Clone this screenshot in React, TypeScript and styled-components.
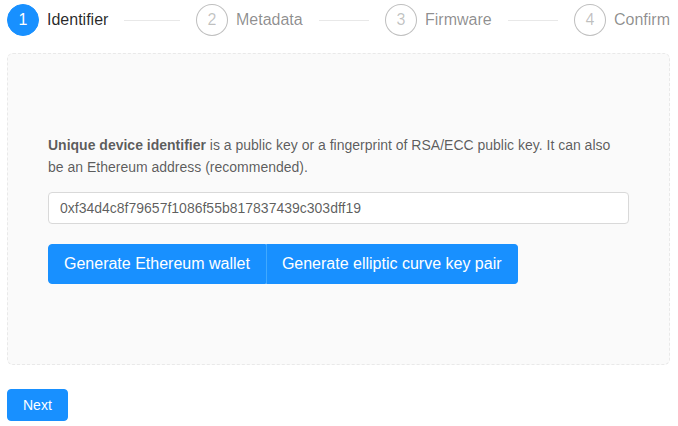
import styled, { createGlobalStyle } from 'styled-components';

const GlobalStyle = createGlobalStyle`
  html, body {
    margin: 0;
    padding: 0;
    background: #fff;
  }
  body {
    font-family: "Liberation Sans", Arial, sans-serif;
    font-size: 14px;
    line-height: 1.5;
    color: rgba(0, 0, 0, 0.65);
  }
  * {
    box-sizing: border-box;
  }
`;

const Page = styled.div`
  width: 678px;
  padding: 4px 8px 0 7px;
`;

const StepsBar = styled.div`
  display: flex;
  width: 100%;
`;

const StepItem = styled.div<{ $last?: boolean }>`
  display: flex;
  align-items: flex-start;
  flex: ${({ $last }) => ($last ? 'none' : '1')};
  overflow: hidden;
  white-space: nowrap;
  margin-right: ${({ $last }) => ($last ? '0' : '16px')};
`;

const StepIcon = styled.div<{ $active?: boolean }>`
  flex: none;
  width: 32px;
  height: 32px;
  border-radius: 50%;
  margin-right: 8px;
  display: flex;
  align-items: center;
  justify-content: center;
  font-size: 16px;
  line-height: 1;
  border: 1px solid ${({ $active }) => ($active ? '#1890ff' : 'rgba(0, 0, 0, 0.25)')};
  background: ${({ $active }) => ($active ? '#1890ff' : '#fff')};
  color: ${({ $active }) => ($active ? '#fff' : 'rgba(0, 0, 0, 0.25)')};
`;

const StepTitle = styled.div<{ $active?: boolean; $last?: boolean }>`
  position: relative;
  font-size: 16px;
  line-height: 32px;
  padding-right: ${({ $last }) => ($last ? '0' : '16px')};
  color: ${({ $active }) => ($active ? 'rgba(0, 0, 0, 0.85)' : 'rgba(0, 0, 0, 0.45)')};

  &::after {
    content: '';
    display: ${({ $last }) => ($last ? 'none' : 'block')};
    position: absolute;
    top: 16px;
    left: 100%;
    width: 9999px;
    height: 1px;
    background: #e8e8e8;
  }
`;

const Panel = styled.div`
  margin-top: 17px;
  padding: 80px 40px;
  background: #fafafa;
  border: 1px dashed #e9e9e9;
  border-radius: 6px;
`;

const Description = styled.p`
  margin: 0 0 14px;
  line-height: 22px;
  color: rgba(0, 0, 0, 0.65);

  strong {
    font-weight: 700;
  }
`;

const TextInput = styled.input`
  display: block;
  width: 100%;
  height: 32px;
  padding: 4px 11px;
  font-family: inherit;
  font-size: 14px;
  color: rgba(0, 0, 0, 0.65);
  background: #fff;
  border: 1px solid #d9d9d9;
  border-radius: 4px;
  outline: none;
`;

const ButtonGroup = styled.div`
  display: flex;
  margin-top: 20px;
`;

const Button = styled.button<{ $size?: 'large' | 'default' }>`
  height: ${({ $size }) => ($size === 'large' ? '40px' : '32px')};
  padding: 0 15px;
  font-family: inherit;
  font-size: ${({ $size }) => ($size === 'large' ? '16px' : '14px')};
  color: #fff;
  background: #1890ff;
  border: 1px solid #1890ff;
  border-radius: 4px;
  cursor: pointer;
  white-space: nowrap;
`;

const GroupButton = styled(Button)`
  &:first-child {
    border-top-right-radius: 0;
    border-bottom-right-radius: 0;
  }
  &:last-child {
    border-top-left-radius: 0;
    border-bottom-left-radius: 0;
    border-left-color: #40a9ff;
  }
`;

const Footer = styled.div`
  margin-top: 24px;
`;

const steps = ['Identifier', 'Metadata', 'Firmware', 'Confirm'];
const current = 0;

export default function App() {
  return (
    <Page>
      <GlobalStyle />
      <StepsBar>
        {steps.map((title, i) => {
          const last = i === steps.length - 1;
          const active = i === current;
          return (
            <StepItem key={title} $last={last}>
              <StepIcon $active={active}>{i + 1}</StepIcon>
              <StepTitle $active={active} $last={last}>
                {title}
              </StepTitle>
            </StepItem>
          );
        })}
      </StepsBar>

      <Panel>
        <Description>
          <strong>Unique device identifier</strong> is a public key or a fingerprint of RSA/ECC public key. It can
          also be an Ethereum address (recommended).
        </Description>
        <TextInput readOnly value="0xf34d4c8f79657f1086f55b817837439c303dff19" />
        <ButtonGroup>
          <GroupButton $size="large">Generate Ethereum wallet</GroupButton>
          <GroupButton $size="large">Generate elliptic curve key pair</GroupButton>
        </ButtonGroup>
      </Panel>

      <Footer>
        <Button>Next</Button>
      </Footer>
    </Page>
  );
}
